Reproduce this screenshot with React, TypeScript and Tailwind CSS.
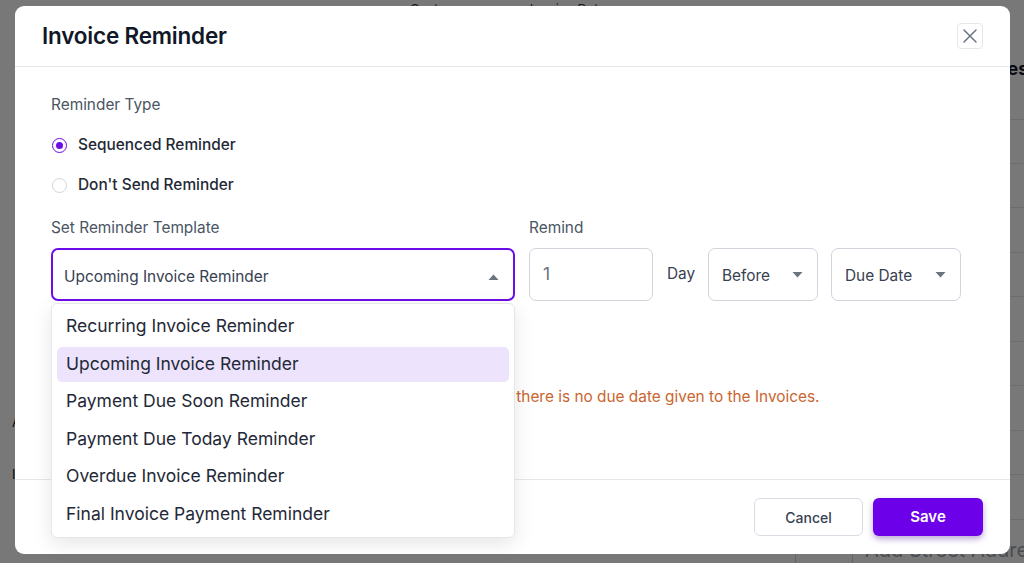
import React from "react";

const font = { fontFamily: "Inter, 'Noto Sans', sans-serif" };

function Caret({ up = false }: { up?: boolean }) {
  return (
    <svg width="11" height="6" viewBox="0 0 11 6" className="shrink-0">
      {up ? (
        <path d="M0.5 6 L5.5 0.5 L10.5 6 Z" fill="#6b7280" />
      ) : (
        <path d="M0.5 0 L5.5 5.5 L10.5 0 Z" fill="#6b7280" />
      )}
    </svg>
  );
}

function Radio({ checked, label }: { checked?: boolean; label: string }) {
  return (
    <label className="flex items-center gap-[11px] h-[20px]">
      <span
        className={
          checked
            ? "ml-[1px] w-[15px] h-[15px] rounded-full border-[1.5px] border-[#6c0ce8] flex items-center justify-center"
            : "ml-[1px] w-[15px] h-[15px] rounded-full border-[1.5px] border-[#d1d5db]"
        }
      >
        {checked && <span className="w-[7px] h-[7px] rounded-full bg-[#6c0ce8]" />}
      </span>
      <span className="text-[15.4px] font-medium text-[#1f2937]">{label}</span>
    </label>
  );
}

const templates = [
  "Recurring Invoice Reminder",
  "Upcoming Invoice Reminder",
  "Payment Due Soon Reminder",
  "Payment Due Today Reminder",
  "Overdue Invoice Reminder",
  "Final Invoice Payment Reminder",
];

function BackgroundPage() {
  return (
    <div className="w-[1024px] h-[563px] bg-white flex overflow-hidden">
      <div className="flex-1 flex flex-col">
        <div className="h-[20px] flex items-start pl-[410px] gap-[60px] text-[13px] text-[#374151]">
          <span>Customer</span>
          <span>Invoice Date</span>
        </div>
        <div className="flex-1" />
        <div className="h-[150px] flex flex-col pl-[12px] gap-[32px] text-[13px] text-[#111827]">
          <span>A</span>
          <span>I</span>
        </div>
      </div>
      <div className="w-[229px] shrink-0 flex flex-col">
        <div className="h-[56px]" />
        <div className="h-[64px] flex items-start pl-[170px] text-[18px] font-bold text-[#111827] whitespace-nowrap">
          Address
        </div>
        {Array.from({ length: 9 }).map((_, i) => (
          <div key={i} className="h-[45px] border-t border-[#e5e7eb]" />
        ))}
        <div className="h-[45px] flex border-t border-[#e5e7eb] border-l border-l-[#d1d5db] overflow-hidden">
          <div className="w-[57px] shrink-0 border-r border-[#d1d5db]" />
          <div className="min-w-0 flex-1 pl-[12px] pt-[16px] text-[20px] leading-[28px] text-[#9ca3af] whitespace-nowrap">
            Add Street Address
          </div>
        </div>
      </div>
    </div>
  );
}

export default function App() {
  return (
    <div className="relative w-[1024px] h-[563px] overflow-hidden" style={font}>
      <BackgroundPage />
      <div className="absolute inset-0 bg-black/[0.53]" />
      <div className="absolute left-[15px] top-[6px] w-[995px] h-[548px] bg-white rounded-[9px] flex flex-col">
        {/* header */}
        <div className="h-[61px] shrink-0 flex items-center justify-between pl-[27px] pr-[27px] border-b border-[#e5e7eb]">
          <h2 className="text-[22.5px] font-semibold text-[#111827] tracking-[-0.2px]">Invoice Reminder</h2>
          <button className="w-[26px] h-[26px] rounded-[4px] border border-[#e5e7eb] flex items-center justify-center">
            <svg width="14" height="14" viewBox="0 0 14 14">
              <path d="M1 1 L13 13 M13 1 L1 13" stroke="#6b7280" strokeWidth="1.5" strokeLinecap="round" />
            </svg>
          </button>
        </div>

        {/* body */}
        <div className="relative h-[412px] shrink-0 pl-[36px] pt-[28px]">
          <div className="text-[15.4px] text-[#4b5563] leading-[20px]">Reminder Type</div>
          <div className="mt-[20px] flex flex-col gap-[20px]">
            <Radio checked label="Sequenced Reminder" />
            <Radio label="Don't Send Reminder" />
          </div>

          <div className="mt-[23px] flex gap-[14px]">
            <div className="w-[464px] flex flex-col gap-[10px]">
              <div className="text-[15.4px] text-[#4b5563] leading-[20px]">Set Reminder Template</div>
              <div className="relative">
                <div className="h-[53px] rounded-[7px] border-2 border-[#6c0ce8] flex items-center justify-between pl-[11px] pr-[14px] pt-[4px]">
                  <span className="text-[15.4px] text-[#374151]">Upcoming Invoice Reminder</span>
                  <Caret up />
                </div>
                <ul className="absolute left-0 top-[55px] w-[464px] bg-white border border-[#e5e7eb] rounded-[6px] shadow-[0_6px_20px_rgba(0,0,0,0.10)] p-[5px] flex flex-col gap-[2.5px] z-10">
                  {templates.map((t) => (
                    <li
                      key={t}
                      className={
                        t === "Upcoming Invoice Reminder"
                          ? "h-[35px] rounded-[5px] bg-[#ede3fd] flex items-center pl-[9px] text-[17.5px] text-[#1f2937]"
                          : "h-[35px] rounded-[5px] flex items-center pl-[9px] text-[17.5px] text-[#1f2937]"
                      }
                    >
                      {t}
                    </li>
                  ))}
                </ul>
              </div>
            </div>

            <div className="flex flex-col gap-[10px]">
              <div className="text-[15.4px] text-[#4b5563] leading-[20px]">Remind</div>
              <div className="flex items-center gap-[14px]">
                <div className="w-[124px] h-[53px] rounded-[7px] border border-[#d1d5db] flex items-center pl-[13px] text-[17.5px] text-[#6b7280]">
                  1
                </div>
                <span className="text-[15.4px] text-[#374151] -mt-[2px] w-[27px]">Day</span>
                <div className="w-[110px] h-[53px] rounded-[7px] border border-[#d1d5db] flex items-center justify-between pl-[13px] pr-[14px]">
                  <span className="text-[15.4px] text-[#374151] mt-[3px]">Before</span>
                  <Caret />
                </div>
                <div className="w-[130px] h-[53px] rounded-[7px] border border-[#d1d5db] flex items-center justify-between pl-[13px] pr-[14px] -ml-[1px]">
                  <span className="text-[15.4px] text-[#374151] mt-[3px]">Due Date</span>
                  <Caret />
                </div>
              </div>
            </div>
          </div>

          <p className="mt-[86px] text-[15.4px] text-[#c9652f] whitespace-nowrap leading-[20px]">
            Note: Reminder for upcoming and due invoice will not be sent if there is no due date given to the Invoices.
          </p>
        </div>

        {/* footer */}
        <div className="flex-1 border-t border-[#e5e7eb] flex items-start justify-end gap-[10px] pr-[27px] pt-[18px]">
          <button className="w-[109px] h-[38px] rounded-[6px] border border-[#d7dce3] bg-white text-[14px] font-medium text-[#374151]">
            Cancel
          </button>
          <button className="w-[110px] h-[38px] rounded-[6px] bg-[#6c00e8] text-[15px] font-semibold text-white shadow-[0_3px_6px_rgba(60,0,140,0.35)]">
            Save
          </button>
        </div>
      </div>
    </div>
  );
}
